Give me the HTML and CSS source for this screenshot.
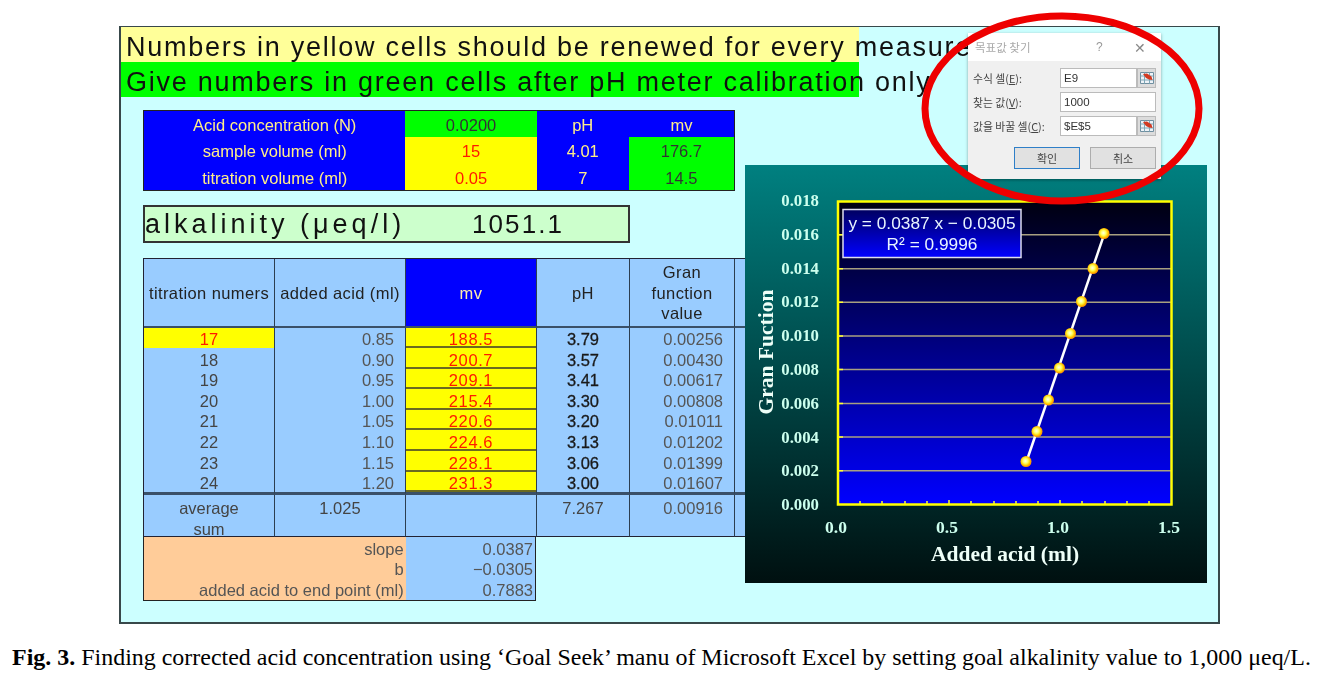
FILE: index.html
```html
<!DOCTYPE html>
<html lang="en">
<head>
<meta charset="utf-8">
<title>Fig. 3</title>
<link rel="stylesheet" href="styles.css">
</head>
<body>
<div class="page">
  <main class="sheet">
    <div class="banner banner-yellow">Numbers in yellow cells should be renewed for every measurement</div>
    <div class="banner banner-green">Give numbers in green cells after pH meter calibration only</div>

    <table class="params">
      <colgroup><col class="p1"><col class="p2"><col class="p3"><col class="p4"></colgroup>
      <tr><td>Acid concentration (N)</td><td class="green dark">0.0200</td><td>pH</td><td>mv</td></tr>
      <tr><td>sample volume (ml)</td><td class="yellow red">15</td><td>4.01</td><td class="green dark">176.7</td></tr>
      <tr><td>titration volume (ml)</td><td class="yellow red">0.05</td><td>7</td><td class="green dark">14.5</td></tr>
    </table>

    <div class="alk"><span class="alk-label">alkalinity (μeq/l)</span><span class="alk-value">1051.1</span></div>

    <table class="data">
      <colgroup><col class="c1"><col class="c2"><col class="c3"><col class="c4"><col class="c5"><col class="c6"></colgroup>
      <thead>
        <tr><th>titration numers</th><th>added acid (ml)</th><th class="head-blue">mv</th><th>pH</th><th>Gran<br>function<br>value</th><th></th></tr>
      </thead>
      <tbody>
        <tr><td class="ctr first-yellow red">17</td><td class="num">0.85</td><td class="mv">188.5</td><td class="ph">3.79</td><td class="gran">0.00256</td><td></td></tr>
        <tr><td class="ctr">18</td><td class="num">0.90</td><td class="mv">200.7</td><td class="ph">3.57</td><td class="gran">0.00430</td><td></td></tr>
        <tr><td class="ctr">19</td><td class="num">0.95</td><td class="mv">209.1</td><td class="ph">3.41</td><td class="gran">0.00617</td><td></td></tr>
        <tr><td class="ctr">20</td><td class="num">1.00</td><td class="mv">215.4</td><td class="ph">3.30</td><td class="gran">0.00808</td><td></td></tr>
        <tr><td class="ctr">21</td><td class="num">1.05</td><td class="mv">220.6</td><td class="ph">3.20</td><td class="gran">0.01011</td><td></td></tr>
        <tr><td class="ctr">22</td><td class="num">1.10</td><td class="mv">224.6</td><td class="ph">3.13</td><td class="gran">0.01202</td><td></td></tr>
        <tr><td class="ctr">23</td><td class="num">1.15</td><td class="mv">228.1</td><td class="ph">3.06</td><td class="gran">0.01399</td><td></td></tr>
        <tr class="last"><td class="ctr">24</td><td class="num">1.20</td><td class="mv">231.3</td><td class="ph">3.00</td><td class="gran">0.01607</td><td></td></tr>
      </tbody>
      <tfoot>
        <tr><td class="ctr"><div class="foot">average<br>sum</div></td><td class="ctr"><div class="foot">1.025</div></td><td></td><td class="ctr"><div class="foot">7.267</div></td><td class="gran"><div class="foot">0.00916</div></td><td></td></tr>
      </tfoot>
    </table>

    <table class="fit">
      <colgroup><col class="f1"><col class="f2"></colgroup>
      <tr><td class="orange">slope</td><td class="val">0.0387</td></tr>
      <tr><td class="orange">b</td><td class="val">−0.0305</td></tr>
      <tr><td class="orange">added acid to end point (ml)</td><td class="val">0.7883</td></tr>
    </table>
  </main>

  <svg class="chart" viewBox="745 165 462 418" width="462" height="418" role="img" aria-label="Gran function chart">
    <defs>
      <linearGradient id="chartBg" x1="0" y1="0" x2="0" y2="1"><stop offset="0" stop-color="#008080"/><stop offset="1" stop-color="#001010"/></linearGradient>
      <linearGradient id="plotBg" x1="0" y1="0" x2="0" y2="1"><stop offset="0" stop-color="#000010"/><stop offset="1" stop-color="#0000ff"/></linearGradient>
      <linearGradient id="labelBg" x1="0" y1="0" x2="0" y2="1"><stop offset="0" stop-color="#000060"/><stop offset="1" stop-color="#0000ff"/></linearGradient>
      <radialGradient id="dot" cx="0.45" cy="0.45"><stop offset="0" stop-color="#ffffe8"/><stop offset="0.45" stop-color="#ffff60"/><stop offset="0.8" stop-color="#ffcc00"/><stop offset="1" stop-color="#ff9900"/></radialGradient>
    </defs>
    <rect x="745" y="165" width="462" height="418" fill="url(#chartBg)"/>
    <rect x="838" y="201.500" width="333.500" height="303" fill="url(#plotBg)"/>
    <g class="grid">
      <line x1="838" x2="1171" y1="234.700" y2="234.700"/><line x1="838" x2="1171" y1="268.700" y2="268.700"/>
      <line x1="838" x2="1171" y1="302.300" y2="302.300"/><line x1="838" x2="1171" y1="336" y2="336"/>
      <line x1="838" x2="1171" y1="369.500" y2="369.500"/><line x1="838" x2="1171" y1="403.500" y2="403.500"/>
      <line x1="838" x2="1171" y1="437" y2="437"/><line x1="838" x2="1171" y1="470.700" y2="470.700"/>
    </g>
    <g class="ticks">
      <path d="M838 234.700h5M838 268.700h5M838 302.300h5M838 336h5M838 369.500h5M838 403.500h5M838 437h5M838 470.700h5"/>
      <path d="M860 504v-3M882 504v-3M905 504v-3M927 504v-3M949 504v-4M971 504v-3M994 504v-3M1016 504v-3M1038 504v-3M1060 504v-4M1082 504v-3M1105 504v-3M1127 504v-3M1149 504v-3"/>
    </g>
    <rect class="frame" x="838" y="201.500" width="333.500" height="303"/>
    <polyline class="trend" points="1026.500,461.500 1104.400,233.700"/>
    <g fill="url(#dot)">
      <circle cx="1026" cy="461.500" r="5.500"/><circle cx="1037" cy="431.500" r="5.500"/><circle cx="1048.500" cy="400" r="5.500"/><circle cx="1059.500" cy="368" r="5.500"/>
      <circle cx="1070.500" cy="333.500" r="5.500"/><circle cx="1081.500" cy="301.500" r="5.500"/><circle cx="1093" cy="268.500" r="5.500"/><circle cx="1104" cy="233.500" r="5.500"/>
    </g>
    <g class="ylabels">
      <text x="819" y="206">0.018</text><text x="819" y="240">0.016</text><text x="819" y="274">0.014</text><text x="819" y="307">0.012</text>
      <text x="819" y="341">0.010</text><text x="819" y="375">0.008</text><text x="819" y="409">0.006</text><text x="819" y="443">0.004</text>
      <text x="819" y="476">0.002</text><text x="819" y="510">0.000</text>
    </g>
    <g class="xlabels">
      <text x="836" y="533">0.0</text><text x="947" y="533">0.5</text><text x="1058" y="533">1.0</text><text x="1169" y="533">1.5</text>
    </g>
    <text class="axis-title" x="1005" y="561">Added acid (ml)</text>
    <text class="axis-title" transform="translate(773 352) rotate(-90)">Gran Fuction</text>
    <rect class="label-box" x="843" y="209.500" width="178" height="48"/>
    <text class="label-text" x="932" y="229">y = 0.0387 x − 0.0305</text>
    <text class="label-text" x="932" y="250">R² = 0.9996</text>
  </svg>

  <section class="dialog">
    <header class="dlg-title"><span class="dlg-name">목표값 찾기</span><span class="dlg-help">?</span><span class="dlg-close">✕</span></header>
    <div class="dlg-body">
      <div class="dlg-row"><label>수식 셀(<u>E</u>):</label><div class="dlg-input">E9</div><span class="picker"><svg viewBox="0 0 16 16" width="16" height="16"><path d="M1.500 2.500h13v11h-13z" fill="#eef3f8" stroke="#6f8fa0"/><path d="M1.500 6h13M1.500 10h13M5.500 2.500v11M10.500 2.500v11" stroke="#7fa8b8" fill="none"/><path d="M4 4l4-.5 4.500 3 1 3.500-3.500-.5-3-1.500z" fill="#d23a22"/></svg></span></div>
      <div class="dlg-row"><label>찾는 값(<u>V</u>):</label><div class="dlg-input wide">1000</div></div>
      <div class="dlg-row"><label>값을 바꿀 셀(<u>C</u>):</label><div class="dlg-input">$E$5</div><span class="picker"><svg viewBox="0 0 16 16" width="16" height="16"><path d="M1.500 2.500h13v11h-13z" fill="#eef3f8" stroke="#6f8fa0"/><path d="M1.500 6h13M1.500 10h13M5.500 2.500v11M10.500 2.500v11" stroke="#7fa8b8" fill="none"/><path d="M4 4l4-.5 4.500 3 1 3.500-3.500-.5-3-1.500z" fill="#d23a22"/></svg></span></div>
      <div class="dlg-actions"><button class="dlg-btn primary">확인</button><button class="dlg-btn">취소</button></div>
    </div>
  </section>

  <svg class="ring" viewBox="0 0 1329 673" width="1329" height="673" aria-hidden="true">
    <ellipse cx="1062" cy="108.500" rx="137" ry="92.500"/>
  </svg>

  <p class="caption"><b>Fig. 3.</b> Finding corrected acid concentration using ‘Goal Seek’ manu of Microsoft Excel by setting goal alkalinity value to 1,000 μeq/L.</p>
</div>
</body>
</html>
```
FILE: styles.css
```css
* { box-sizing: border-box; }
html, body { margin: 0; padding: 0; background: #fff; }
.page { position: relative; width: 1329px; height: 673px; overflow: hidden; padding-top: 26px; }

.sheet {
  width: 1101px; height: 598px; margin-left: 119px;
  background: #ccffff; border: 2px solid #38484a; border-top-width: 1px;
  font-family: "Liberation Sans", sans-serif; color: #111;
  filter: blur(0.35px);
}
.banner {
  width: 738px; height: 35px; padding-left: 5px; white-space: nowrap; color: #111;
  font-size: 27px; line-height: 40px; letter-spacing: 1.75px;
}
.banner-yellow { background: #ffff99; }
.banner-green { background: #00ff00; }

table { border-spacing: 0; border-collapse: separate; table-layout: fixed; font-family: "Liberation Sans", sans-serif; }
td, th { padding: 0; font-weight: normal; }

.params { margin: 13px 0 0 22px; width: 592px; height: 81px; border: 1.5px solid #222; background: #0000ff; color: #ffee88; font-size: 16.5px; }
.params td { text-align: center; height: 26px; padding-top: 3px; }
.p1 { width: 261px; } .p2 { width: 131px; } .p3 { width: 92px; } .p4 { width: 105px; }
.green { background: #00ff00; } .yellow { background: #ffff00; }
.dark { color: #333; } .red { color: #ff1a00; }

.alk { margin: 14px 0 0 22px; width: 487px; height: 38px; display: flex; align-items: center; background: #ccffcc; border: 2px solid #333; color: #111; padding-top: 1px; }
.alk-label { letter-spacing: 4px; width: 327px; font-size: 27px; white-space: nowrap; }
.alk-value { letter-spacing: 2.1px; font-size: 26px; }

.data { margin: 15px 0 0 22px; width: 602px; background: #99ccff; color: #444; font-size: 16.5px; border-top: 1.5px solid #223; border-left: 1.5px solid #223; }
.c1, .c2, .c3 { width: 131px; } .c4 { width: 93px; } .c5 { width: 105px; } .c6 { width: 11px; }
.data th, .data td { border-right: 1px solid #2c3e50; }
.data th { height: 68.5px; color: #222; border-bottom: 2px solid #3a5068; line-height: 20.5px; letter-spacing: 0.4px; padding-top: 1px; }
.head-blue { background: #0000ff; color: #ffeeaa !important; }
.data tbody td { height: 20.6px; line-height: 16px; padding-top: 3px; padding-bottom: 1px; vertical-align: bottom; }
.data tbody tr.last td { border-bottom: 3px solid #3a5068; height: 23.6px; }
.data tfoot td { height: 42px; border-bottom: 1.5px solid #223; vertical-align: top; }
.foot { height: 40.5px; padding-top: 3px; line-height: 21px; }
.ctr { text-align: center; }
.first-yellow { background: #ffff00; }
.num { text-align: right; padding-right: 11px !important; color: #555; }
.mv { background: #ffff00; color: #ff1a00; text-align: center; letter-spacing: 0.6px; box-shadow: inset 0 -2px 0 #6b6a20; }
.ph { text-align: center; color: #1a1a1a; -webkit-text-stroke: 0.3px #1a1a1a; }
.gran { text-align: right; padding-right: 11px !important; color: #555; }

.fit { margin-left: 22px; width: 393px; height: 63.5px; border: 1.5px solid #222; border-top: 0; font-size: 16.5px; color: #555; }
.f1 { width: 261px; } .f2 { width: 129px; }
.fit td { height: 20.67px; line-height: 17px; text-align: right; padding: 3px 2px 0 0; }
.orange { background: #ffcc99; }
.val { background: #99ccff; }

.chart { position: absolute; left: 745px; top: 165px; display: block; filter: blur(0.3px); }
.grid line { stroke: #a8a080; stroke-width: 1.5; }
.ticks path { stroke: #ffff33; stroke-width: 1.5; fill: none; }
.frame { fill: none; stroke: #ffff00; stroke-width: 2.5; }
.trend { stroke: #fff; stroke-width: 2.5; fill: none; }
.ylabels text, .xlabels text { font-family: "Liberation Serif", serif; font-weight: bold; fill: #ccffee; }
.ylabels text { font-size: 16.8px; text-anchor: end; }
.xlabels text { font-size: 17.5px; text-anchor: middle; }
.axis-title { font-family: "Liberation Serif", serif; font-weight: bold; font-size: 21.5px; fill: #eefff8; text-anchor: middle; }
.label-box { fill: url(#labelBg); stroke: #dde; stroke-width: 1.5; }
.label-text { font-family: "Liberation Sans", sans-serif; font-size: 17.3px; fill: #e8f4ff; text-anchor: middle; }

.dialog { position: absolute; left: 968px; top: 33px; width: 193px; height: 146px; background: #f0f0f0; box-shadow: 0 1px 3px rgba(0,0,0,.35); font-family: "Noto Sans CJK KR", sans-serif; font-size: 11px; color: #444; filter: blur(0.35px); }
.dlg-title { height: 28px; background: #fff; display: flex; align-items: center; padding: 0 15px 0 7px; font-size: 11.5px; }
.dlg-name { flex: 1; color: #aaa; }
.dlg-help { width: 38px; color: #999; font-size: 12px; font-family: "Liberation Sans", sans-serif; }
.dlg-close { color: #888; font-size: 14px; }
.dlg-body { padding: 7px 5px 0 5px; display: flex; flex-direction: column; gap: 4px; }
.dlg-row { display: flex; align-items: center; height: 20px; }
.dlg-row label { width: 87px; white-space: nowrap; font-size: 10.8px; }
.dlg-input { width: 77px; height: 20px; background: #fff; border: 1px solid #bbb; font-family: "Liberation Sans", sans-serif; font-size: 11.5px; line-height: 18px; padding-left: 3px; color: #333; }
.dlg-input.wide { width: 96px; }
.picker { width: 19px; height: 20px; border: 1px solid #bbb; background: #dcdcdc; display: flex; align-items: center; justify-content: center; }
.dlg-actions { display: flex; gap: 10px; margin: 7px 0 0 41px; }
.dlg-btn { width: 66px; height: 22px; padding: 0; background: #e1e1e1; border: 1px solid #adadad; font: inherit; color: #444; }
.dlg-btn.primary { border: 1.5px solid #2f7fc8; }

.ring { position: absolute; left: 0; top: 0; pointer-events: none; }
.ring ellipse { fill: none; stroke: #ee0000; stroke-width: 7; }

.caption { position: absolute; left: 12px; top: 643px; margin: 0; white-space: nowrap; font-family: "Liberation Serif", serif; font-size: 23.96px; line-height: 28px; color: #000; }
```
